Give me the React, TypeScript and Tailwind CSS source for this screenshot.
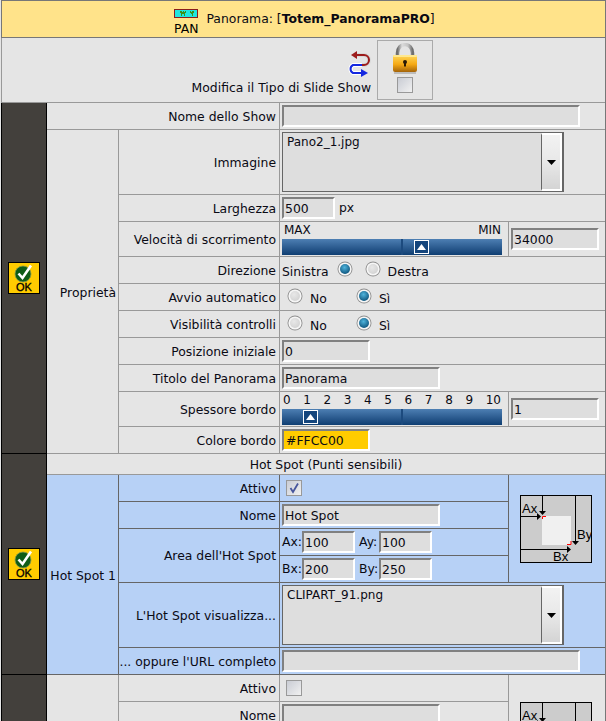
import type { ReactNode } from "react"

const font = "font-['DejaVu_Sans',Verdana,sans-serif]"

function Field({ value = "", className = "", bg = "bg-[#dedede]" }: { value?: string; className?: string; bg?: string }) {
  return (
    <div
      className={`h-[22px] border-2 border-t-[#808080] border-l-[#808080] border-b-white border-r-white px-px leading-[20px] whitespace-nowrap overflow-hidden ${bg} ${className}`}
    >
      {value}
    </div>
  )
}

function Check({ checked = false }: { checked?: boolean }) {
  return (
    <div className="w-4 h-4 border border-[#999] bg-gradient-to-br from-[#c9ccd4] to-[#f1f1f1] flex items-center justify-center">
      {checked && (
        <svg width="12" height="12" viewBox="0 0 12 12">
          <path d="M2.5 6 L5 10 L10 1.5" fill="none" stroke="#47569c" strokeWidth="1.8" />
        </svg>
      )}
    </div>
  )
}

function Radio({ on = false }: { on?: boolean }) {
  return (
    <svg width="16" height="16" viewBox="0 0 16 16" className="shrink-0">
      <defs>
        <radialGradient id="radio-off" cx="0.4" cy="0.35" r="0.8">
          <stop offset="0" stopColor="#e8e8e8" />
          <stop offset="1" stopColor="#cfcfcf" />
        </radialGradient>
        <radialGradient id="radio-on" cx="0.45" cy="0.35" r="0.7">
          <stop offset="0" stopColor="#4fb4dc" />
          <stop offset="1" stopColor="#0a4f78" />
        </radialGradient>
      </defs>
      <circle cx="8" cy="8" r="7.5" fill="#8f8f8f" />
      <circle cx="8" cy="8" r="6.6" fill="#f6f6f6" />
      <circle cx="8" cy="8" r="5" fill={on ? "url(#radio-on)" : "url(#radio-off)"} />
    </svg>
  )
}

function OkIcon() {
  return (
    <div className="mx-auto w-8 h-8 bg-[#ffcc00] border border-black flex flex-col items-center">
      <svg width="26" height="20" viewBox="0 0 26 20" className="shrink-0">
        <circle cx="12" cy="11" r="8" fill="#0f5c17" stroke="#8a9a4a" strokeWidth="0.8" />
        <path d="M7.5 10.5 L11.5 15 L20 2.5" fill="none" stroke="#fff" strokeWidth="2.6" />
      </svg>
      <span className="text-[11px] leading-[9px] text-black font-['Liberation_Sans',sans-serif] [-webkit-text-stroke:0.3px_black]">OK</span>
    </div>
  )
}

function SelectBox({ value }: { value: string }) {
  return (
    <div className="flex w-[282px] h-[60px] border border-[#666] border-r-2 border-r-[#666] bg-[#dedede]">
      <div className="flex-1 pl-1 pt-px leading-4 text-[12px]">{value}</div>
      <div className="w-[21px] border-[2px] border-l-[#666] border-l-[1px] border-[#fff] bg-gradient-to-b from-[#f2f2f2] via-[#e8e8e8] to-[#d4d4d4] flex items-center justify-center">
        <svg width="9" height="5" viewBox="0 0 9 5">
          <path d="M0 0 H9 L4.5 5 Z" fill="#000" />
        </svg>
      </div>
    </div>
  )
}

function Slider({ thumbLeft, notch, children }: { thumbLeft: string; notch: string; children: ReactNode }) {
  return (
    <div className="pl-[2px] pr-[5px]">
      <div className="h-[16px] leading-[14px] text-[12px]">{children}</div>
      <div className="relative h-4 w-[220px] bg-gradient-to-b from-[#4d7fb3] to-[#0e3e72]">
        <div className={`absolute top-0 bottom-0 w-[2px] bg-[#1c4a7e] ${notch}`} />
        <div className={`absolute top-px w-[15px] h-[14px] border border-white bg-[#14457c] flex items-center justify-center ${thumbLeft}`}>
          <svg width="9" height="6" viewBox="0 0 9 6">
            <path d="M4.5 0 L9 6 H0 Z" fill="#fff" />
          </svg>
        </div>
      </div>
    </div>
  )
}

function Diagram() {
  return (
    <svg width="72" height="68" viewBox="0 0 72 68" className="block font-['Liberation_Sans',sans-serif]">
      <rect x="0.5" y="0.5" width="71" height="67" fill="#cccccc" stroke="#000" />
      <rect x="22" y="21" width="29" height="29" fill="#f0f0f0" />
      <path d="M22.5 24 V21.5 H26 M51 46 V49.5 H47" fill="none" stroke="#f00" strokeWidth="1" />
      <path d="M22.5 1 V17 M55.5 1 V47 M1 21.5 H18 M1 54.5 H48" stroke="#000" fill="none" />
      <path d="M19 16 H26 L22.5 20 Z M52 46 H59 L55.5 50 Z M17 18 L21 21.5 L17 25 Z M47 51 L51 54.5 L47 58 Z" fill="#000" />
      <text x="2" y="18" fontSize="13" fill="#000">Ax</text>
      <text x="57" y="44" fontSize="13" fill="#000">By</text>
      <text x="33" y="66" fontSize="13" fill="#000">Bx</text>
    </svg>
  )
}

function PanIcon() {
  return (
    <svg width="24" height="9" viewBox="0 0 24 9" className="block">
      <rect x="0.5" y="0.5" width="23" height="8" fill="#1fe6e0" stroke="#8a1c1c" />
      <path d="M6 2 h2 v1 h1 v-1 h1 v1 h1 v-1 h1 v2 h-1 v3 h-1 v-2 h-2 v2 h-1 v-3 h-1 z M16 2 h1 v1 h1 v-1 h2 v2 h-1 v3 h-1 v-2 h-1 v-1 h-1 z" fill="#3d8f1a" />
    </svg>
  )
}

function SwapIcon() {
  return (
    <svg width="24" height="28" viewBox="0 0 24 28" className="block">
      <path d="M8 6 H17 A5 5 0 0 1 17 16 H13" fill="none" stroke="#d8d8d8" strokeWidth="4" />
      <path d="M8 6 H17 A5 5 0 0 1 17 16 H13" fill="none" stroke="#9c1c1c" strokeWidth="2" />
      <path d="M10 2 V10 L4 6 Z" fill="#9c1c1c" />
      <path d="M15 16 H6 A4.5 4.5 0 0 0 6 24 H15" fill="none" stroke="#fff" strokeWidth="4" />
      <path d="M15 16 H6 A4.5 4.5 0 0 0 6 24 H15" fill="none" stroke="#1428e0" strokeWidth="2" />
      <path d="M14 20 V28 L21 24 Z" fill="#1428e0" />
    </svg>
  )
}

function LockIcon() {
  return (
    <svg width="26" height="31" viewBox="0 0 26 31" className="block">
      <defs>
        <linearGradient id="lock-body" x1="0" y1="0" x2="0" y2="1">
          <stop offset="0" stopColor="#ffd85a" />
          <stop offset="0.55" stopColor="#f5a915" />
          <stop offset="1" stopColor="#a4640a" />
        </linearGradient>
        <linearGradient id="lock-arc" x1="0" y1="0" x2="1" y2="0">
          <stop offset="0" stopColor="#6f6f6f" />
          <stop offset="0.3" stopColor="#dcdcdc" />
          <stop offset="0.7" stopColor="#c4c4c4" />
          <stop offset="1" stopColor="#707070" />
        </linearGradient>
      </defs>
      <path d="M5.5 14 V10 A7.5 8.5 0 0 1 20.5 10 V14" fill="none" stroke="url(#lock-arc)" strokeWidth="3.5" />
      <rect x="1" y="12" width="24" height="17" rx="2" fill="url(#lock-body)" />
      <rect x="1" y="12" width="24" height="2" rx="1" fill="#ffe88f" />
      <circle cx="13" cy="19" r="2" fill="#2a1a05" />
      <rect x="12" y="19.5" width="2" height="4" fill="#2a1a05" />
      <rect x="2" y="29" width="22" height="2" fill="#bdbdbd" />
    </svg>
  )
}

const line = "border border-[#999]"
const blue = "border border-[#666] bg-[#b7d1f6]"
const dark = "border border-black bg-[#43403c]"
const label = "text-right pr-[3px] pt-[2px] whitespace-nowrap"

function Row({ name, children }: { name: string; children: ReactNode }) {
  return (
    <tr className="h-[27px]">
      <td className={`${line} ${label}`}>{name}</td>
      <td className={`${line} px-[2px]`} colSpan={2}>
        {children}
      </td>
    </tr>
  )
}

function HotRow({ name, children }: { name: string; children: ReactNode }) {
  return (
    <tr className="h-[27px]">
      <td className={`${blue} ${label}`}>{name}</td>
      <td className={`${blue} px-[2px]`}>{children}</td>
    </tr>
  )
}

export default function App() {
  return (
    <div className={`h-[721px] w-[606px] overflow-hidden bg-[#e5e5e5] border-r border-[#777] text-[12.4px] text-[#0a0a14] ${font}`}>
      <table className="ml-px w-[604px] table-fixed border-collapse">
        <colgroup>
          <col className="w-[45px]" />
          <col className="w-[72px]" />
          <col className="w-[161px]" />
          <col className="w-[229px]" />
          <col className="w-[97px]" />
        </colgroup>
        <tbody>
          <tr className="h-[37px]">
            <td colSpan={5} className="border border-[#777] bg-[#ffe38a]">
              <div className="flex items-start pl-[172px] gap-2 h-[36px]">
                <div className="flex flex-col items-center pt-[8px]">
                  <PanIcon />
                  <span className="leading-[14px] mt-[4px] text-black">PAN</span>
                </div>
                <span className="mt-[9px]">
                  Panorama: [<b>Totem_PanoramaPRO</b>]
                </span>
              </div>
            </td>
          </tr>
          <tr className="h-[65px]">
            <td colSpan={5} className={line}>
              <div className="flex justify-end items-end pr-[172px] gap-[6px]">
                <div className="flex flex-col items-end pb-[2px]">
                  <SwapIcon />
                  <span className="mt-[2px]">Modifica il Tipo di Slide Show</span>
                </div>
                <div className="w-[56px] h-[60px] border border-[#aaa] flex flex-col items-center pt-[2px] gap-[3px]">
                  <LockIcon />
                  <Check />
                </div>
              </div>
            </td>
          </tr>

          <tr className="h-[27px]">
            <td rowSpan={11} className={dark}>
              <OkIcon />
            </td>
            <td colSpan={2} className={`${line} ${label}`}>
              Nome dello Show
            </td>
            <td colSpan={2} className={`${line} px-[2px]`}>
              <Field className="w-[298px]" />
            </td>
          </tr>
          <tr className="h-[65px]">
            <td rowSpan={10} className={`${line} text-right pr-[2px] pt-[3px]`}>
              Proprietà
            </td>
            <td className={`${line} ${label}`}>Immagine</td>
            <td colSpan={2} className={`${line} px-[2px]`}>
              <SelectBox value="Pano2_1.jpg" />
            </td>
          </tr>
          <Row name="Larghezza">
            <div className="flex items-center gap-1">
              <Field value="500" className="w-[53px]" />
              <span>px</span>
            </div>
          </Row>
          <tr className="h-[35px]">
            <td className={`${line} ${label}`}>Velocità di scorrimento</td>
            <td className={line}>
              <Slider thumbLeft="left-[132px]" notch="left-[119px]">
                <div className="flex justify-between px-[2px]">
                  <span>MAX</span>
                  <span>MIN</span>
                </div>
              </Slider>
            </td>
            <td className={`${line} px-[2px]`}>
              <Field value="34000" className="w-[88px]" />
            </td>
          </tr>
          <Row name="Direzione">
            <div className="flex items-center pt-[2px]">
              <span className="mt-[3px]">Sinistra</span>
              <span className="ml-[8px] -mt-[3px]"><Radio on /></span>
              <span className="ml-3 -mt-[3px]"><Radio /></span>
              <span className="ml-[7px] mt-[3px]">Destra</span>
            </div>
          </Row>
          {["Avvio automatico", "Visibilità controlli"].map((name) => (
            <Row key={name} name={name}>
              <div className="flex items-center pl-[5px] pt-[2px]">
                <span className="-mt-[3px]"><Radio /></span>
                <span className="ml-[7px] mt-[3px] w-[46px]">No</span>
                <span className="-mt-[3px]"><Radio on /></span>
                <span className="ml-[7px] mt-[3px]">Sì</span>
              </div>
            </Row>
          ))}
          <Row name="Posizione iniziale">
            <Field value="0" className="w-[88px]" />
          </Row>
          <Row name="Titolo del Panorama">
            <Field value="Panorama" className="w-[158px]" />
          </Row>
          <tr className="h-[35px]">
            <td className={`${line} ${label}`}>Spessore bordo</td>
            <td className={line}>
              <Slider thumbLeft="left-[21px]" notch="left-[119px]">
                <div className="flex justify-between pl-px pr-[2px]">
                  {[0, 1, 2, 3, 4, 5, 6, 7, 8, 9, 10].map((n) => (
                    <span key={n}>{n}</span>
                  ))}
                </div>
              </Slider>
            </td>
            <td className={`${line} px-[2px]`}>
              <Field value="1" className="w-[88px]" />
            </td>
          </tr>
          <Row name="Colore bordo">
            <Field value="#FFCC00" className="w-[88px] pl-[2px]" bg="bg-[#ffcc00]" />
          </Row>

          <tr className="h-[21px]">
            <td rowSpan={7} className={dark}>
              <OkIcon />
            </td>
            <td colSpan={4} className={`${line} text-center pt-[2px] leading-4`}>
              Hot Spot (Punti sensibili)
            </td>
          </tr>
          <tr className="h-[27px]">
            <td rowSpan={6} className={`${blue} text-right pr-[2px] pt-[3px]`}>
              Hot Spot 1
            </td>
            <td className={`${blue} ${label}`}>Attivo</td>
            <td className={`${blue} pl-[6px]`}>
              <Check checked />
            </td>
            <td rowSpan={4} className={`${blue} pl-[11px]`}>
              <Diagram />
            </td>
          </tr>
          <HotRow name="Nome">
            <Field value="Hot Spot" className="w-[158px]" />
          </HotRow>
          <tr className="h-[27px]">
            <td rowSpan={2} className={`${blue} ${label}`}>
              Area dell'Hot Spot
            </td>
            <td className={`${blue} px-[2px]`}>
              <div className="flex items-center">
                <span className="w-5">Ax:</span>
                <Field value="100" className="w-[53px]" />
                <span className="ml-1 w-5">Ay:</span>
                <Field value="100" className="w-[53px]" />
              </div>
            </td>
          </tr>
          <tr className="h-[27px]">
            <td className={`${blue} px-[2px]`}>
              <div className="flex items-center">
                <span className="w-5">Bx:</span>
                <Field value="200" className="w-[53px]" />
                <span className="ml-1 w-5">By:</span>
                <Field value="250" className="w-[53px]" />
              </div>
            </td>
          </tr>
          <tr className="h-[65px]">
            <td className={`${blue} ${label}`}>L'Hot Spot visualizza...</td>
            <td colSpan={2} className={`${blue} px-[2px]`}>
              <SelectBox value="CLIPART_91.png" />
            </td>
          </tr>
          <tr className="h-[27px]">
            <td className={`${blue} ${label}`}>... oppure l'URL completo</td>
            <td colSpan={2} className={`${blue} px-[2px]`}>
              <Field className="w-[298px]" />
            </td>
          </tr>

          <tr className="h-[27px]">
            <td rowSpan={4} className={dark} />
            <td rowSpan={4} className={line} />
            <td className={`${line} ${label}`}>Attivo</td>
            <td className={`${line} pl-[6px]`}>
              <Check />
            </td>
            <td rowSpan={4} className={`${line} pl-[11px] align-top pt-[27px]`}>
              <Diagram />
            </td>
          </tr>
          <tr className="h-[27px]">
            <td className={`${line} ${label}`}>Nome</td>
            <td className={`${line} px-[2px]`}>
              <Field className="w-[158px]" />
            </td>
          </tr>
          <tr className="h-[27px]">
            <td className={line} />
            <td className={line} />
          </tr>
          <tr className="h-[27px]">
            <td className={line} />
            <td className={line} />
          </tr>
        </tbody>
      </table>
    </div>
  )
}
